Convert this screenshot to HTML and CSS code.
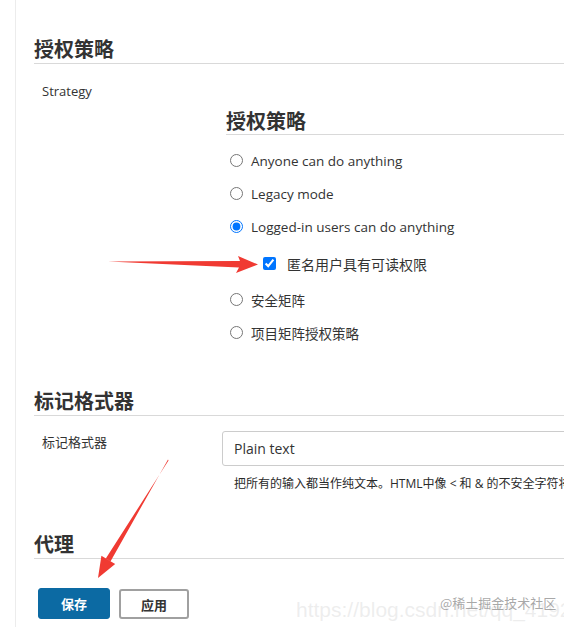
FILE: index.html
```html
<!DOCTYPE html>
<html lang="zh-CN">
<head>
<meta charset="utf-8">
<title>配置</title>
<link rel="stylesheet" href="styles.css">
</head>
<body>
<div class="page">
  <h2 class="section-title first">授权策略</h2>
  <div class="row strategy-row">
    <div class="row-label">Strategy</div>
    <div class="row-body strategy-body">
      <h3 class="sub-title">授权策略</h3>
      <label class="option"><input type="radio" name="s"><span>Anyone can do anything</span></label>
      <label class="option"><input type="radio" name="s"><span>Legacy mode</span></label>
      <label class="option"><input type="radio" name="s" checked><span>Logged-in users can do anything</span></label>
      <label class="option nested"><input type="checkbox" checked><span>匿名用户具有可读权限</span></label>
      <label class="option after-nested"><input type="radio" name="s"><span>安全矩阵</span></label>
      <label class="option"><input type="radio" name="s"><span>项目矩阵授权策略</span></label>
    </div>
  </div>

  <h2 class="section-title second">标记格式器</h2>
  <div class="row markup-row">
    <div class="row-label markup-label">标记格式器</div>
    <div class="row-body markup-body">
      <div class="select-box">Plain text</div>
      <div class="desc">把所有的输入都当作纯文本。HTML中像 &lt; 和 &amp; 的不安全字符将被转义为其相应的字符实体。</div>
    </div>
  </div>

  <h2 class="section-title third">代理</h2>
  <div class="buttons">
    <button class="btn btn-primary">保存</button>
    <button class="btn btn-secondary">应用</button>
  </div>
</div>

<svg class="annotations" width="564" height="627" viewBox="0 0 564 627">
  <polygon fill="#f03a32" points="108,261.5 240,261 238,256 258,264.5 236,273 239,267.5"/>
  <polygon fill="#f03a32" points="168,459.5 110.6,561.2 101.4,555.8 98,578 115.2,564 105.8,558.6 168.5,460.5"/>
</svg>

<div class="watermark-url">https://blog.csdn.net/qq_41920562</div>
<div class="watermark-brand">@稀土掘金技术社区</div>
</body>
</html>
```

FILE: styles.css
```css
html, body {
  margin: 0;
  padding: 0;
  overflow: hidden;
  background: #ffffff;
}

body {
  width: 564px;
  height: 627px;
  position: relative;
  font-family: "Open Sans", "Noto Sans CJK SC", sans-serif;
  color: #333333;
}

.page {
  margin-left: 15px;
  border-left: 1px solid #ececec;
  padding-left: 18px;
  padding-top: 36px;
  width: 700px;
  height: 627px;
  box-sizing: border-box;
}

.section-title {
  margin: 0;
  font-family: "Noto Sans CJK SC", sans-serif;
  font-size: 20px;
  font-weight: 700;
  line-height: 26px;
  height: 26px;
  color: #333333;
  border-bottom: 1px solid #d9d9d9;
  padding-bottom: 1px;
}

.section-title.second { margin-top: 39px; }
.section-title.third { margin-top: 38px; }

.row {
  display: flex;
}

.row-label {
  width: 184px;
  padding-left: 8px;
  font-size: 13px;
  line-height: 20px;
  flex-shrink: 0;
}

.strategy-row { margin-top: 17px; }

.strategy-body {
  padding-top: 27px;
  flex: 1;
}

.sub-title {
  margin: 0;
  font-family: "Noto Sans CJK SC", sans-serif;
  font-size: 20px;
  font-weight: 700;
  line-height: 26px;
  height: 26px;
  border-bottom: 1px solid #d9d9d9;
  margin-bottom: 9px;
}

.option {
  display: flex;
  align-items: center;
  height: 33px;
  padding-left: 4px;
  font-size: 13.5px;
  color: #333333;
}

.option input {
  margin: 0 8px 0 0;
  width: 13px;
  height: 13px;
  accent-color: #0075ff;
}

.option.nested {
  margin-top: 4px;
  padding-left: 37px;
  font-size: 14px;
}

.option.nested input {
  margin-right: 11px;
}

.option.after-nested { margin-top: 3px; }

.markup-row { margin-top: 15px; }

.markup-label {
  width: 180px;
  padding-top: 1px;
}

.markup-body { flex: 1; }

.select-box {
  height: 35px;
  box-sizing: border-box;
  border: 1px solid #cccccc;
  border-radius: 3px;
  padding-left: 11px;
  font-size: 14px;
  line-height: 33px;
  color: #333333;
}

.desc {
  margin-top: 9px;
  padding-left: 12px;
  font-size: 12px;
  line-height: 18px;
  white-space: nowrap;
  color: #2a2a2a;
}

.buttons {
  margin-top: 29px;
  padding-left: 4px;
  display: flex;
  gap: 9px;
}

.btn {
  height: 31px;
  border-radius: 3px;
  font-family: "Noto Sans CJK SC", sans-serif;
  font-size: 13px;
  font-weight: 700;
  padding: 0;
  cursor: pointer;
}

.btn-primary {
  width: 72px;
  background: #0c6aa3;
  border: 1px solid #0c6aa3;
  color: #ffffff;
}

.btn-secondary {
  width: 70px;
  margin-top: 1px;
  height: 30px;
  background: #ffffff;
  border: 2px solid #a0a0a0;
  color: #333333;
}

.annotations {
  position: absolute;
  left: 0;
  top: 0;
  pointer-events: none;
}

.watermark-url {
  position: absolute;
  left: 296px;
  top: 598px;
  font-family: "Liberation Sans", sans-serif;
  font-size: 21px;
  color: rgba(205, 205, 205, 0.35);
  white-space: nowrap;
}

.watermark-brand {
  position: absolute;
  left: 440px;
  top: 593px;
  font-family: "Noto Sans CJK SC", sans-serif;
  font-size: 13px;
  color: rgba(140, 140, 140, 0.75);
  white-space: nowrap;
}
```
